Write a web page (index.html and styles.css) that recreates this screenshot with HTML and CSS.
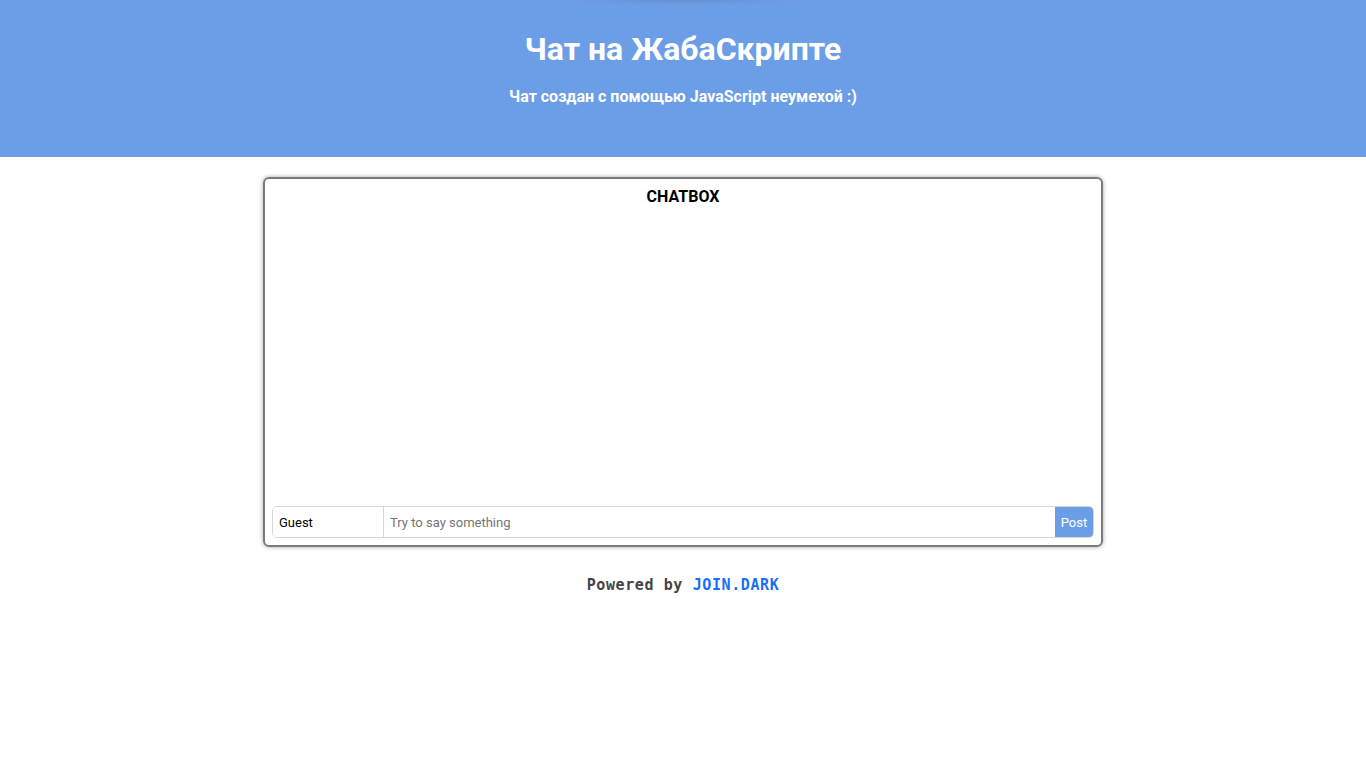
FILE: index.html
```html
<!DOCTYPE html>
<html lang="ru">
<head>
<meta charset="utf-8">
<title>Чат на ЖабаСкрипте</title>
<link rel="stylesheet" href="styles.css">
</head>
<body>
<header class="hero">
  <h1 class="hero-title">Чат на ЖабаСкрипте</h1>
  <p class="hero-sub">Чат создан с помощью JavaScript неумехой :)</p>
</header>
<main class="main">
  <section class="chatbox">
    <h2 class="chatbox-title">CHATBOX</h2>
    <div class="messages"></div>
    <form class="composer">
      <input class="name-input" type="text" value="Guest">
      <input class="msg-input" type="text" placeholder="Try to say something">
      <button class="post-btn" type="button">Post</button>
    </form>
  </section>
  <p class="powered">Powered by <span class="brand">JOIN.DARK</span></p>
</main>
</body>
</html>
```
FILE: styles.css
```css
* { box-sizing: border-box; }
html, body { margin: 0; padding: 0; background: #fff; }
body { font-family: Roboto, "Liberation Sans", Arial, sans-serif; }

.hero {
  height: 157px;
  background: radial-gradient(ellipse 120px 6px at 683px 0, rgba(90,120,170,0.35), rgba(90,120,170,0) 100%), #6c9ee8;
  color: #fff;
  text-align: center;
  padding-top: 29px;
}
.hero-title {
  margin: 0;
  font-size: 32px;
  font-weight: 700;
  line-height: 40px;
}
.hero-sub {
  margin: 18px 0 0;
  font-size: 16px;
  font-weight: 700;
  line-height: 20px;
}

.main {
  display: flex;
  flex-direction: column;
  align-items: center;
  padding-top: 20px;
}
.chatbox {
  width: 840px;
  height: 370px;
  border: 2px solid #7a7a7a;
  border-radius: 6px;
  box-shadow: 0 0 4px rgba(0,0,0,0.35);
  display: flex;
  flex-direction: column;
  padding: 8px 7px 7px;
}
.chatbox-title {
  margin: 0;
  text-align: center;
  font-size: 16px;
  font-weight: 700;
  line-height: 20px;
  color: #000;
}
.messages { flex: 1; }
.composer {
  display: flex;
  height: 32px;
  margin: 0;
  border: 1px solid #d6d6d6;
  border-radius: 5px;
  overflow: hidden;
}
.name-input, .msg-input {
  border: 0;
  outline: 0;
  font-family: Roboto, "Liberation Sans", Arial, sans-serif;
  font-size: 13px;
  padding: 0 6px;
  height: 100%;
  color: #000;
  background: #fff;
}
.name-input {
  width: 111px;
  border-right: 1px solid #d6d6d6;
}
.msg-input { flex: 1; }
.msg-input::placeholder { color: #757575; }
.post-btn {
  width: 38px;
  border: 0;
  background: #6c9ee8;
  color: #fff;
  font-family: Roboto, "Liberation Sans", Arial, sans-serif;
  font-size: 13px;
  padding: 0;
}

.powered {
  margin: 28px 0 0;
  font-family: "DejaVu Sans Mono", "Liberation Mono", monospace;
  font-weight: 700;
  font-size: 15px;
  line-height: 20px;
  letter-spacing: 0.6px;
  color: #444;
}
.brand { color: #1a6ef5; }
```
